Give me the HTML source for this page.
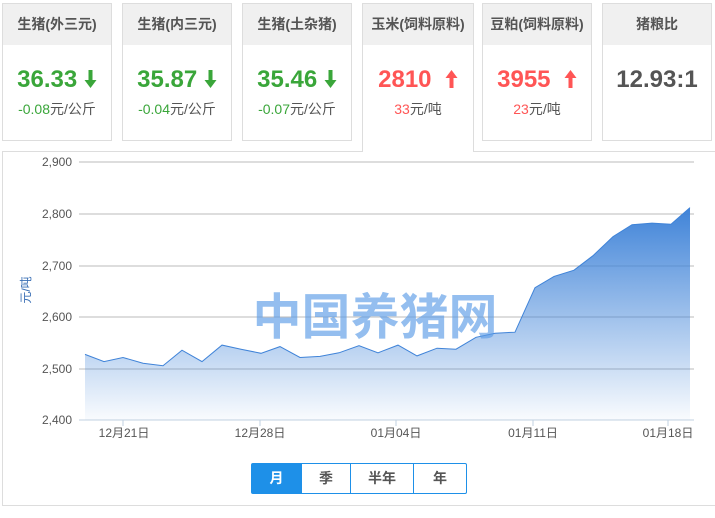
<!DOCTYPE html>
<html><head><meta charset="utf-8"><style>
*{margin:0;padding:0;box-sizing:border-box}
body{width:715px;height:518px;background:#fff;font-family:"Liberation Sans","Noto Sans CJK SC",sans-serif;position:relative;overflow:hidden}
.card{position:absolute;top:3px;width:110px;height:138px;border:1px solid #ddd;background:#fff;text-align:center}
.card .h{height:41px;background:#f0f0f0;font-size:14px;font-weight:bold;color:#555;line-height:41px}
.card .v{font-size:24px;font-weight:bold;margin-top:20px;line-height:30px}
.card .v svg{vertical-align:-1px}
.card .s{font-size:14px;color:#555;margin-top:4px}
.g{color:#3aa63a}.r{color:#f55}
.act{height:149px;border-bottom:none;z-index:2}
.panel{position:absolute;left:2px;top:151px;width:716px;height:355px;border:1px solid #ddd;border-right:none}
.btns{position:absolute;left:251px;top:463px;height:31px;display:flex;border:1px solid #1e90e8;border-radius:2px;z-index:3}
.btns div{font-size:14px;font-weight:bold;color:#555;line-height:29px;text-align:center;border-left:1px solid #1e90e8}
.btns div:first-child{border-left:none;background:#1e90e8;color:#fff}
</style></head><body>
<div class="card" style="left:2px"><div class="h">生猪(外三元)</div><div class="v g">36.33 <svg width="13" height="18" viewBox="0 0 13 18"><path d="M4.5 0h4v10h4l-6 8-6-8h4z" fill="#3aa63a"/></svg></div><div class="s"><span class="g">-0.08</span>元/公斤</div></div>
<div class="card" style="left:122px"><div class="h">生猪(内三元)</div><div class="v g">35.87 <svg width="13" height="18" viewBox="0 0 13 18"><path d="M4.5 0h4v10h4l-6 8-6-8h4z" fill="#3aa63a"/></svg></div><div class="s"><span class="g">-0.04</span>元/公斤</div></div>
<div class="card" style="left:242px"><div class="h">生猪(土杂猪)</div><div class="v g">35.46 <svg width="13" height="18" viewBox="0 0 13 18"><path d="M4.5 0h4v10h4l-6 8-6-8h4z" fill="#3aa63a"/></svg></div><div class="s"><span class="g">-0.07</span>元/公斤</div></div>
<div class="card act" style="left:362px;width:112px"><div class="h">玉米(饲料原料)</div><div class="v r">2810 &nbsp;<svg width="13" height="18" viewBox="0 0 13 18"><path d="M4.5 18h4v-10h4l-6-8-6 8h4z" fill="#f55"/></svg></div><div class="s"><span class="r">33</span>元/吨</div></div>
<div class="card" style="left:482px"><div class="h">豆粕(饲料原料)</div><div class="v r">3955 &nbsp;<svg width="13" height="18" viewBox="0 0 13 18"><path d="M4.5 18h4v-10h4l-6-8-6 8h4z" fill="#f55"/></svg></div><div class="s"><span class="r">23</span>元/吨</div></div>
<div class="card" style="left:602px"><div class="h">猪粮比</div><div class="v" style="color:#555">12.93:1</div></div>
<div class="panel"></div>
<svg style="position:absolute;left:0;top:0" width="715" height="518">
<defs><linearGradient id="gr" x1="0" y1="207" x2="0" y2="420" gradientUnits="userSpaceOnUse"><stop offset="0" stop-color="#3f83d8"/><stop offset="1" stop-color="#3f83d8" stop-opacity="0.03"/></linearGradient></defs>
<g stroke="#bbb" stroke-width="1">
<line x1="79" y1="162" x2="694" y2="162"/><line x1="79" y1="214" x2="694" y2="214"/><line x1="79" y1="266" x2="694" y2="266"/><line x1="79" y1="317" x2="694" y2="317"/><line x1="79" y1="369" x2="694" y2="369"/></g>
<polygon fill="url(#gr)" points="85,420 85,354.4 104,361.6 123,357.5 143,363.2 163,365.7 182,350.2 202,361.6 222,345.1 241,349.2 261,353.3 280,346.6 300,357.5 320,356.4 339,352.8 359,345.6 378,352.8 398,345.1 417,355.9 437,348.2 456,349.2 476,337.3 495,333.2 515,332.2 535,287.7 554,276.4 574,270.2 593,255.7 613,236.6 632,224.7 652,223.1 671,224.2 690,207.6 690,420"/>
<polyline fill="none" stroke="#3f83d8" stroke-width="1" points="85,354.4 104,361.6 123,357.5 143,363.2 163,365.7 182,350.2 202,361.6 222,345.1 241,349.2 261,353.3 280,346.6 300,357.5 320,356.4 339,352.8 359,345.6 378,352.8 398,345.1 417,355.9 437,348.2 456,349.2 476,337.3 495,333.2 515,332.2 535,287.7 554,276.4 574,270.2 593,255.7 613,236.6 632,224.7 652,223.1 671,224.2 690,207.6"/>
<line x1="79" y1="420" x2="694" y2="420" stroke="#c0d0e0"/>
<g stroke="#c0d0e0"><line x1="123" y1="420" x2="123" y2="426"/><line x1="260" y1="420" x2="260" y2="426"/><line x1="396" y1="420" x2="396" y2="426"/><line x1="533" y1="420" x2="533" y2="426"/><line x1="668" y1="420" x2="668" y2="426"/></g>
<g font-size="12" fill="#555" text-anchor="end" font-family="Liberation Sans,sans-serif">
<text x="72" y="166">2,900</text><text x="72" y="218">2,800</text><text x="72" y="270">2,700</text><text x="72" y="321">2,600</text><text x="72" y="373">2,500</text><text x="72" y="424">2,400</text></g>
<g font-size="12" fill="#555" text-anchor="middle" font-family="Liberation Sans,Noto Sans CJK SC,sans-serif">
<text x="124" y="437">12月21日</text><text x="260" y="437">12月28日</text><text x="396" y="437">01月04日</text><text x="533" y="437">01月11日</text><text x="668" y="437">01月18日</text></g>
<text x="0" y="0" transform="translate(30,290) rotate(-90)" text-anchor="middle" font-size="12" fill="#3a6fb5" font-family="Liberation Sans,Noto Sans CJK SC,sans-serif">元/吨</text>
<text x="375" y="334" text-anchor="middle" font-size="49" font-weight="bold" fill="#5b9be6" fill-opacity="0.65" font-family="Noto Sans CJK SC,sans-serif">中国养猪网</text>
</svg>
<div class="btns"><div style="width:49px">月</div><div style="width:49px">季</div><div style="width:63px">半年</div><div style="width:53px">年</div></div>
</body></html>
